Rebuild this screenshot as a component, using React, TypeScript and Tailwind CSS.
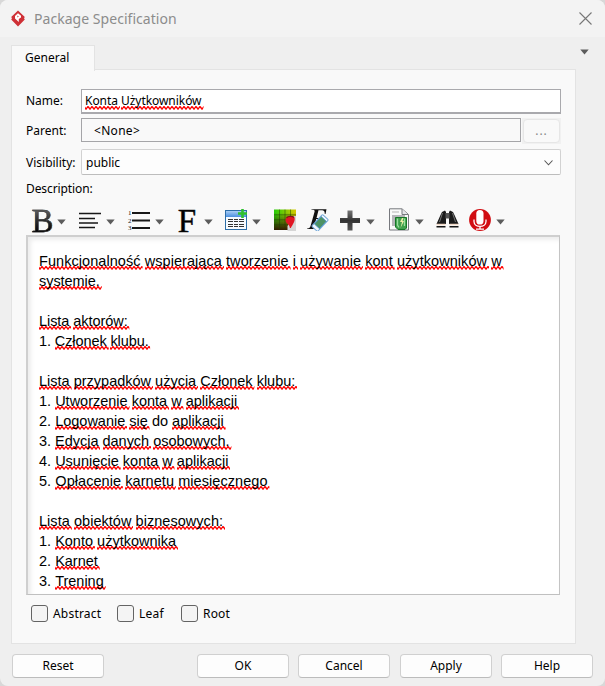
import React from "react";

const ui = "font-['Noto_Sans','Open_Sans',sans-serif]";

function Squiggle() {
  return (
    <svg className="absolute left-0 bottom-0 h-[4px] w-full" aria-hidden="true">
      <defs>
        <pattern id="zigzag" width="4" height="4" patternUnits="userSpaceOnUse">
          <path d="M-1 0 L1 3.2 L3 0.4 L5 3.2" fill="none" stroke="#ff0000" strokeWidth="1.25" />
        </pattern>
      </defs>
      <rect width="100%" height="4" fill="url(#zigzag)" />
    </svg>
  );
}

/** A word that the spell checker has marked; the mark runs behind the letters. */
function Word({ children }: { children: React.ReactNode }) {
  return (
    <span className="relative isolate inline-block whitespace-pre">
      {children}
      <span className="absolute left-0 -right-[2px] bottom-[1px] -z-10 h-[4px]">
        <Squiggle />
      </span>
    </span>
  );
}

/** Words are marked unless they are numbers or listed as known. */
function Line({ text, className = "" }: { text: string; className?: string }) {
  const words = text.split(" ");
  return (
    <div className={`h-5 leading-5 whitespace-pre ${className}`}>
      {words.map((w, i) => (
        <React.Fragment key={i}>
          {i > 0 && " "}
          {/^\d\.$/.test(w) || w === "do" || w === "" ? w : <Word>{w}</Word>}
        </React.Fragment>
      ))}
    </div>
  );
}

function Arrow({ className = "" }: { className?: string }) {
  return (
    <svg className={`h-[6px] w-[9px] shrink-0 ${className}`} viewBox="0 0 9 6">
      <path d="M0.300 0.5H8.700L4.5 5.500Z" fill="#5c5c5c" />
    </svg>
  );
}

function Box({ label, className = "" }: { label: string; className?: string }) {
  return (
    <label className={`flex items-center ${className}`}>
      <span className="mr-[5px] h-[17px] w-[17px] rounded-[3px] border border-[#646464] bg-[#f4f4f4]" />
      {label}
    </label>
  );
}

function Btn({ children, className = "" }: { children: React.ReactNode; className?: string }) {
  return (
    <button
      className={`h-6 w-[92px] rounded-[4px] border border-[#d0d0d0] border-b-[#bcbcbc] bg-[#fdfdfd] leading-[20px] ${className}`}
    >
      {children}
    </button>
  );
}

function Toolbar() {
  return (
    <div className="flex h-[35px] items-center pl-[6px]">
      <span className="mt-[7px] flex w-[21px] justify-center bg-gradient-to-b from-[#777] to-black bg-clip-text font-['Liberation_Serif',serif] text-[33px] leading-[33px] text-transparent [-webkit-text-stroke:0.4px_#333]">
        B
      </span>
      <Arrow className="ml-[4px] mt-[9px]" />
      <svg className="ml-[13px] mt-[5px] h-[17px] w-[23px]" viewBox="0 0 23 17">
        <path d="M0 1.5H22M0 6.5H16M0 11H19M0 15.5H16" stroke="#171717" strokeWidth="1.7" />
      </svg>
      <Arrow className="ml-[4px] mt-[9px]" />
      <svg className="ml-[13px] mt-[4px] h-[22px] w-[23px] overflow-visible" viewBox="0 0 23 22">
        <path d="M4 4H22M4 11.500H22M4 19H22" stroke="#171717" strokeWidth="2" />
        <g className="font-['Liberation_Serif',serif] text-[7px]" fill="#111">
          <text x="0" y="6">1</text>
          <text x="0" y="13.5">2</text>
          <text x="0" y="21">3</text>
        </g>
      </svg>
      <Arrow className="ml-[4px] mt-[9px]" />
      <span className="ml-[14px] mt-[7px] flex w-[18px] justify-center font-['Liberation_Serif',serif] text-[33px] leading-[33px] text-black [-webkit-text-stroke:0.5px_#111]">
        F
      </span>
      <Arrow className="ml-[8px] mt-[9px]" />
      <svg className="ml-[12px] mt-[4px] h-[22px] w-[22px]" viewBox="0 0 22 22">
        <defs>
          <linearGradient id="tableHead" x1="0" y1="0" x2="0" y2="1">
            <stop offset="0" stopColor="#a9cdf5" />
            <stop offset="1" stopColor="#4a8fe0" />
          </linearGradient>
        </defs>
        <rect x="0.5" y="1.5" width="21" height="19" fill="#f7fbff" stroke="#2d6ea8" />
        <rect x="1" y="2" width="20" height="6" fill="url(#tableHead)" />
        <path d="M3 10.500H8M9 10.500H13M14 10.500H19M3 12.500H8M9 12.500H13M14 12.500H19M3 15.500H8M9 15.500H13M14 15.500H19M3 17.500H8M9 17.500H13M14 17.500H19" stroke="#333" strokeWidth="1.1" />
        <path d="M17.500 0V9M13 4.500H22" stroke="#2fc02f" strokeWidth="2.6" />
      </svg>
      <Arrow className="ml-[5px] mt-[9px]" />
      <svg className="ml-[13px] mt-[4px] h-[22px] w-[22px]" viewBox="0 0 22 22">
        <defs>
          <linearGradient id="swatch" x1="0" y1="0" x2="1" y2="0">
            <stop offset="0" stopColor="#24cc08" />
            <stop offset="1" stopColor="#d8c800" />
          </linearGradient>
          <linearGradient id="swatchShade" x1="0" y1="0" x2="0" y2="1">
            <stop offset="0.15" stopColor="#300800" stopOpacity="0" />
            <stop offset="1" stopColor="#300800" stopOpacity="0.9" />
          </linearGradient>
        </defs>
        <rect x="0" y="0.5" width="22" height="20.5" fill="url(#swatch)" />
        <rect x="0" y="0.5" width="22" height="20.5" fill="url(#swatchShade)" />
        <path d="M5.500 .5V21M11 .5V21M16.500 .5V21M0 5.800H22M0 10.800H22M0 15.800H22" stroke="#1e3c05" strokeOpacity="0.55" strokeWidth="0.9" />
        <path d="M13.500 22V17L17 12L19 7H22V22Z" fill="#d6d6d6" />
        <path d="M11.500 11C11.500 7 19 6 20.500 8.500C21.500 12 19 15 16.800 19L15.800 19C16 15.500 11.500 14.500 11.500 11Z" fill="#e11624" />
        <path d="M12.500 8.800C14 7 18.500 6.800 20 8.500" fill="none" stroke="#86101a" strokeWidth="1.400" />
      </svg>
      <svg className="ml-[11px] mt-[4px] h-[23px] w-[22px]" viewBox="0 0 22 23">
        <path d="M4.500 1.200H19.500L18.500 6H17.800C17.700 3 17 2.300 14.500 2.300H11.500L9.500 10H11C13 10 13.500 9.500 14.500 8H15L13.300 14H12.700C12.800 11.500 12.500 11 10.500 11H9.200L7.500 17.500C7 19.800 7.300 20.200 9.300 20.500L9.200 21H0L.2 20.500C2.500 20.200 3 19.800 3.700 17.500L7.500 4C8 2 7.300 1.900 4.400 1.700Z" fill="#111" />
        <g transform="rotate(-47 13 15)">
          <rect x="5" y="11" width="16" height="8" rx="1" fill="#f2f8ff" stroke="#75a9d8" />
          <rect x="8.500" y="11.500" width="10" height="7" fill="#4d9264" stroke="#4d91cc" strokeWidth=".8" />
        </g>
      </svg>
      <svg className="ml-[11px] mt-[5px] h-[21px] w-[20px]" viewBox="0 0 20 21">
        <defs>
          <linearGradient id="plusFill" x1="0" y1="0" x2="0" y2="1">
            <stop offset="0" stopColor="#777" />
            <stop offset="0.5" stopColor="#333" />
            <stop offset="1" stopColor="#555" />
          </linearGradient>
        </defs>
        <path d="M7.500 .5H12.500V8H20V13H12.500V20.500H7.500V13H0V8H7.500Z" fill="url(#plusFill)" />
      </svg>
      <Arrow className="ml-[6px] mt-[9px]" />
      <svg className="ml-[14px] mt-[4px] h-[23px] w-[21px]" viewBox="0 0 21 23">
        <path d="M.5 .8H13L19.500 6.500V22H.5Z" fill="#fafafa" stroke="#77797e" />
        <path d="M13 1V6.500H19" fill="#e5e6ea" stroke="#77797e" />
        <path d="M3 4H10" stroke="#b5b5b5" />
        <rect x="3" y="7" width="13" height="11" fill="#b6b6ba" />
        <path d="M6.500 9.500H17.500V20L16 21.500H9L6.500 19Z" fill="#3fa04c" stroke="#167527" />
        <path d="M8.500 10.500V17L10 19.500M15.500 10.500V18" stroke="#9be0a0" strokeWidth="1.300" fill="none" />
        <path d="M13 10L11 14H13L11.500 20L15 13H13.500L14.500 10Z" fill="#f0eda9" />
      </svg>
      <Arrow className="ml-[5px] mt-[9px]" />
      <svg className="ml-[12px] mt-[3px] h-[19px] w-[23px]" viewBox="0 0 23 19">
        <path d="M6 2L9 .5L10 2V14H.5L4.500 5ZM17 2L14 .5L13 2V14H22.500L18.500 5Z" fill="#1b1b1b" />
        <rect x="9.500" y="3" width="4" height="5.500" fill="#555" />
        <path d="M6.500 3L3.500 12M16.500 3L19.500 12" stroke="#747474" strokeWidth="1" />
        <path d="M.5 14.500H9.500M13.500 14.500H22.500" stroke="#f1d9c7" strokeWidth="1.500" />
        <path d="M.5 16H9.500V17.500H.5ZM13.500 16H22.500V17.500H13.500Z" fill="#151515" />
      </svg>
      <svg className="ml-[10px] mt-[4px] h-[22px] w-[22px]" viewBox="0 0 22 22">
        <circle cx="11" cy="11" r="10.900" fill="#d10d12" />
        <rect x="7.300" y="1" width="7.200" height="14.500" rx="3.600" fill="#fff" />
        <path d="M5 10.500V12.500C5 19 17 19 17 12.500V10.500M11 17V20M7 20.200H15" fill="none" stroke="#fff" strokeWidth="1.300" />
      </svg>
      <Arrow className="ml-[5px] mt-[9px]" />
    </div>
  );
}

const lines: [string, string][] = [
  ["Funkcjonalność wspierająca tworzenie i używanie kont użytkowników w", "tracking-[0.06px]"],
  ["systemie.", "tracking-[-0.06px]"],
  ["", ""],
  ["Lista aktorów:", "tracking-[-0.06px]"],
  ["1. Członek klubu.", "tracking-[-0.1px]"],
  ["", ""],
  ["Lista przypadków użycia Członek klubu:", ""],
  ["1. Utworzenie konta w aplikacji", ""],
  ["2. Logowanie się do aplikacji", ""],
  ["3. Edycja danych osobowych.", "tracking-[-0.02px]"],
  ["4. Usunięcie konta w aplikacji", ""],
  ["5. Opłacenie karnetu miesięcznego", "tracking-[0.06px]"],
  ["", ""],
  ["Lista obiektów biznesowych:", "tracking-[0.04px]"],
  ["1. Konto użytkownika", ""],
  ["2. Karnet", ""],
  ["3. Trening", ""],
];

export default function App() {
  return (
    <div className="h-[686px] w-[605px] bg-[#d8d8d8]">
      <div className={`flex h-full flex-col overflow-hidden rounded-[8px] bg-[#efefef] text-[12px] text-black ${ui}`}>
        <header className="flex h-[37px] shrink-0 items-center bg-[#f3f3f3] pl-[11px] pr-[13px]">
          <svg className="h-[17px] w-[14px]" viewBox="0 0 14 17">
            <path d="M7 .5L13.800 7L13 8.300L13.800 9.500L7 16.500L.2 9.500L1 8.300L.2 7Z" fill="#cf3036" />
            <path d="M4 6L7 3.300L10 5.800V7.500L7.800 9V12L4 8.500Z" fill="#fff" />
            <path d="M6.300 5.500L7.800 6.500L6.500 7.500Z" fill="#cf3036" />
          </svg>
          <h1 className="ml-[9px] text-[14px] leading-5 tracking-[0.04px] text-[#8c8c8c]">Package Specification</h1>
          <svg className="ml-auto h-[13px] w-[13px]" viewBox="0 0 13 13">
            <path d="M.5 .5L12.500 12.500M12.500 .5L.5 12.500" stroke="#777" strokeWidth="1.100" />
          </svg>
        </header>
        <div className="mt-[8px] flex h-[24px] shrink-0 items-start justify-between pl-[11px] pr-[16px]">
          <div className="relative z-10 h-[26px] w-[84px] border border-b-0 border-[#e3e3e3] bg-[#f9f9f9] pl-[13px] leading-[24px]">
            General
          </div>
          <Arrow className="mt-[4px]" />
        </div>
        <main className="ml-[11px] flex h-[575px] w-[565px] shrink-0 flex-col border border-[#e3e3e3] bg-[#f9f9f9] pl-[14px]">
          <div className="mt-[19px] flex h-6 items-center">
            <span className="w-[55px]">Name:</span>
            <div className="flex h-[25px] w-[480px] shrink-0 items-center border border-b-2 border-[#a9a9ad] bg-white pl-[3px]">
              <Line text="Konta Użytkowników" className="tracking-[-0.05px]" />
            </div>
          </div>
          <div className="mt-[5px] flex h-[26px] items-start">
            <span className="w-[55px] leading-[26px]">Parent:</span>
            <div className="h-6 w-[440px] shrink-0 border border-[#a5a5a8] pl-[12px] leading-[23px] tracking-[0.3px]">&lt;None&gt;</div>
            <div className="ml-px h-[26px] w-[39px] bg-[#f1f1f1] p-px">
              <button className="h-6 w-[37px] rounded-[4px] border border-[#e6e6e6] bg-[#f9f9f9] leading-[22px] tracking-[1px] text-[#888]">
                ...
              </button>
            </div>
          </div>
          <div className="mt-[5px] flex h-[26px] items-center">
            <span className="w-[55px] shrink-0 whitespace-nowrap pt-px">Visibility:</span>
            <div className="flex h-[26px] w-[480px] shrink-0 items-center justify-between rounded-[2px] border border-[#d2d2d2] border-b-[#bdbdbd] bg-[#fdfdfd] pl-[4px] pr-[7px] pt-px">
              public
              <svg className="h-[6px] w-[9px]" viewBox="0 0 9 6">
                <path d="M.5 .5L4.500 4.800L8.500 .5" fill="none" stroke="#555" strokeWidth="1.100" />
              </svg>
            </div>
          </div>
          <div className="mt-[5px] h-[18px] leading-[18px] tracking-[-0.1px]">Description:</div>
          <div className="mt-[2px]">
            <Toolbar />
          </div>
          <div className="h-[360px] w-[534px] shrink-0 border-l-2 border-t-2 border-r border-b border-t-[#cfcfcf] border-l-[#cfcfcf] border-r-[#c4c4c4] border-b-[#c0c0c0] bg-white pl-[11px] pt-[14px] font-['Liberation_Sans',Arial,sans-serif] text-[14.500px] shadow-[inset_3px_3px_4px_#ededed]">
            {lines.map(([text, cls], i) => (
              <Line key={i} text={text} className={cls} />
            ))}
          </div>
          <div className="mt-[10px] flex h-[17px] items-center pl-[5px]">
            <Box label="Abstract" className="w-[86px] tracking-[0.2px]" />
            <Box label="Leaf" className="w-[64px] tracking-[0.2px]" />
            <Box label="Root" className="tracking-[0.2px]" />
          </div>
        </main>
        <footer className="mt-[10px] flex pl-3">
          <Btn>Reset</Btn>
          <Btn className="ml-[93px]">OK</Btn>
          <Btn className="ml-[9px]">Cancel</Btn>
          <Btn className="ml-[10px]">Apply</Btn>
          <Btn className="ml-[9px]">Help</Btn>
        </footer>
      </div>
    </div>
  );
}
